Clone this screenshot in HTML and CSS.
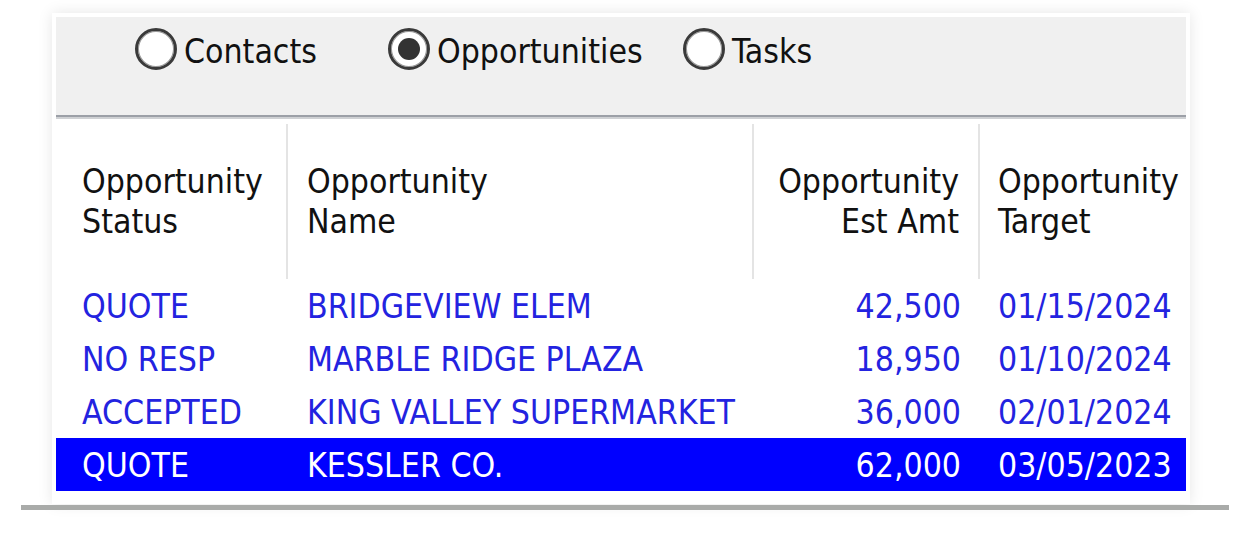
FILE: index.html
```html
<!DOCTYPE html>
<html lang="en">
<head>
  <meta charset="UTF-8">
  <title>Opportunities</title>
  <link rel="stylesheet" href="styles.css">
</head>

<body>
  <div id="dialog">
    <!-- Record type selector -->
    <div class="radioBar">
      <label class="radio radioContacts"><span class="mark"></span><span class="text">Contacts</span></label>
      <label class="radio radioOpps"><span class="mark checked"></span><span class="text">Opportunities</span></label>
      <label class="radio"><span class="mark"></span><span class="text">Tasks</span></label>
    </div>
    <div class="separator"></div>

    <!-- Opportunity list -->
    <div class="grid">
      <div class="head">Opportunity<br>Status</div>
      <div class="head">Opportunity<br>Name</div>
      <div class="head right">Opportunity<br>Est Amt</div>
      <div class="head last">Opportunity<br>Target</div>

      <div class="row">
        <div class="cell">QUOTE</div>
        <div class="cell">BRIDGEVIEW ELEM</div>
        <div class="cell right">42,500</div>
        <div class="cell">01/15/2024</div>
      </div>
      <div class="row">
        <div class="cell">NO RESP</div>
        <div class="cell">MARBLE RIDGE PLAZA</div>
        <div class="cell right">18,950</div>
        <div class="cell">01/10/2024</div>
      </div>
      <div class="row">
        <div class="cell">ACCEPTED</div>
        <div class="cell">KING VALLEY SUPERMARKET</div>
        <div class="cell right">36,000</div>
        <div class="cell">02/01/2024</div>
      </div>
      <div class="row selected">
        <div class="cell">QUOTE</div>
        <div class="cell">KESSLER CO.</div>
        <div class="cell right">62,000</div>
        <div class="cell">03/05/2023</div>
      </div>
    </div>
  </div>
  <div class="baseLine"></div>
</body>
</html>
```

FILE: styles.css
```css
* { box-sizing: border-box; margin: 0; padding: 0; }
html, body {
  width: 100%;
  height: 100%;
  background: #ffffff;
  font-family: "DejaVu Sans Condensed", "DejaVu Sans", sans-serif;
  font-size: 33.5px;
  color: #111;
  overflow: hidden;
}

#dialog {
  margin: 13px 0 0 52px;
  width: 1138px;
  padding: 4px 4px 13px 4px;
  background: #ffffff;
  box-shadow: 0 0 14px rgba(0,0,0,0.10);
}

/* Radio buttons */
.radioBar {
  height: 98px;
  background: #f0f0f0;
  display: flex;
  align-items: flex-start;
  padding: 11px 0 0 79px;
}

.radio {
  display: flex;
  align-items: center;
  gap: 7px;
  height: 42px;
}
.radio .text { margin-top: 4px; }
.radioContacts { width: 253px; }
.radioOpps { width: 295px; }

.mark {
  width: 42px;
  height: 42px;
  border-radius: 50%;
  border: 3px solid #3a3a3a;
  background: #fff;
  box-shadow: inset 0 0 0 1px #9a9a9a;
  display: flex;
  align-items: center;
  justify-content: center;
}
.mark.checked::after {
  content: "";
  width: 22px;
  height: 22px;
  border-radius: 50%;
  background: #333;
}

.separator {
  height: 4px;
  border-top: 2px solid #9ca0a7;
  border-bottom: 2px solid #cfd1d4;
}

/* List */
.grid {
  display: grid;
  grid-template-columns: 232px 466px 226px 206px;
}

.head {
  height: 155px;
  margin-top: 5px;
  line-height: 40px;
  display: flex;
  align-items: center;
  padding: 0 19px;
  border-right: 2px solid #e4e4e4;
}
.head:first-child { padding-left: 26px; }
.head.right { justify-content: flex-end; text-align: right; }
.head.last { border-right: none; padding-left: 18px; }

.row { display: contents; }
.cell {
  height: 53px;
  line-height: 50px;
  padding: 3px 19px 0 19px;
  color: #2323e0;
  white-space: nowrap;
}
.row .cell:first-child { padding-left: 26px; }
.row .cell:last-child { padding-left: 18px; }
.cell.right { text-align: right; }

.selected .cell {
  background: #0000ff;
  color: #ffffff;
}

.baseLine {
  margin: 1px 0 0 21px;
  width: 1208px;
  height: 5px;
  background: #a9aba9;
}
```
